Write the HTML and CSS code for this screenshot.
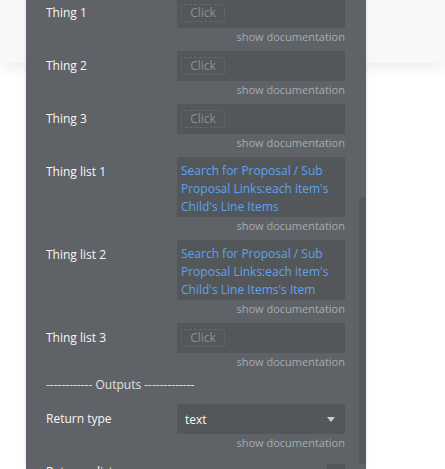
FILE: index.html
```html
<!DOCTYPE html>
<html lang="en">
<head>
    <meta charset="UTF-8">
    <meta name="viewport" content="width=device-width, initial-scale=1.0">
    <title>Plugin properties</title>
    <link rel="stylesheet" href="styles.css">
</head>
<body>
    <div class="topbar"></div>
    <div class="panel">
        <div class="props">
            <div class="prop">
                <div class="label">Thing 1</div>
                <div class="field"><span class="click">Click</span></div>
                <div class="doc">show documentation</div>
            </div>
            <div class="prop">
                <div class="label">Thing 2</div>
                <div class="field"><span class="click">Click</span></div>
                <div class="doc">show documentation</div>
            </div>
            <div class="prop">
                <div class="label">Thing 3</div>
                <div class="field"><span class="click">Click</span></div>
                <div class="doc">show documentation</div>
            </div>
            <div class="prop">
                <div class="label">Thing list 1</div>
                <div class="field expr">Search for Proposal / Sub Proposal Links:each item's Child's Line Items</div>
                <div class="doc">show documentation</div>
            </div>
            <div class="prop">
                <div class="label">Thing list 2</div>
                <div class="field expr">Search for Proposal / Sub Proposal Links:each item's Child's Line Items's Item</div>
                <div class="doc">show documentation</div>
            </div>
            <div class="prop">
                <div class="label">Thing list 3</div>
                <div class="field"><span class="click">Click</span></div>
                <div class="doc">show documentation</div>
            </div>

            <div class="section">------------ Outputs -------------</div>

            <div class="prop">
                <div class="label">Return type</div>
                <div class="field select">
                    <span>text</span>
                    <span class="caret"></span>
                </div>
                <div class="doc">show documentation</div>
            </div>
            <div class="prop">
                <div class="label">Return a list</div>
                <div class="check-cell"><span class="check"></span></div>
            </div>
        </div>
        <div class="scrollbar"></div>
    </div>
</body>
</html>
```

FILE: styles.css
```css
body {
    margin: 0;
    height: 469px;
    overflow: hidden;
    background-color: #ffffff;
    font-family: "Open Sans", "Liberation Sans", sans-serif;
    position: relative;
}
.topbar {
    height: 63px;
    background-color: #f8f8f8;
    box-shadow: 0 4px 14px rgba(0, 0, 0, 0.08);
}
.panel {
    position: absolute;
    top: 0;
    left: 26px;
    width: 340px;
    height: 469px;
    background-color: #5f6367;
    box-shadow: 0 0 4px rgba(0, 0, 0, 0.12);
    overflow: hidden;
}
.props {
    margin-top: -2px;
    padding-left: 20px;
}
.prop {
    display: grid;
    grid-template-columns: 131px 168px;
    margin-bottom: 7px;
}
.label {
    color: #f7f7f7;
    font-size: 12px;
    line-height: 30px;
}
.field {
    background-color: #53575a;
    height: 30px;
    box-sizing: border-box;
    padding: 6px 4px;
}
.click {
    display: block;
    width: 44px;
    height: 18px;
    box-sizing: border-box;
    border: 1px dashed #65696c;
    border-radius: 3px;
    color: #8c9093;
    font-size: 12px;
    line-height: 16px;
    text-align: center;
}
.expr {
    height: 60px;
    padding: 5px 4px 1px;
    color: #5ca3f0;
    font-size: 12px;
    line-height: 18px;
}
.select {
    display: flex;
    justify-content: space-between;
    align-items: center;
    padding: 0 10px 0 8px;
    color: #f7f7f7;
    font-size: 12px;
}
.caret {
    width: 0;
    height: 0;
    border-left: 4.5px solid transparent;
    border-right: 4.5px solid transparent;
    border-top: 5px solid #c9d0d6;
}
.doc {
    grid-column: 2;
    text-align: right;
    color: #a9abad;
    font-size: 11px;
    line-height: 14px;
    padding-top: 2px;
}
.section {
    color: #dfe1e2;
    font-size: 12px;
    line-height: 18px;
    margin: 0 0 10px;
}
.check-cell {
    display: flex;
    justify-content: flex-end;
    padding-top: 7px;
}
.check {
    width: 18px;
    height: 18px;
    background-color: #53575a;
}
.scrollbar {
    position: absolute;
    top: 197px;
    left: 333px;
    width: 7px;
    height: 267px;
    background-color: #55595c;
}
```
